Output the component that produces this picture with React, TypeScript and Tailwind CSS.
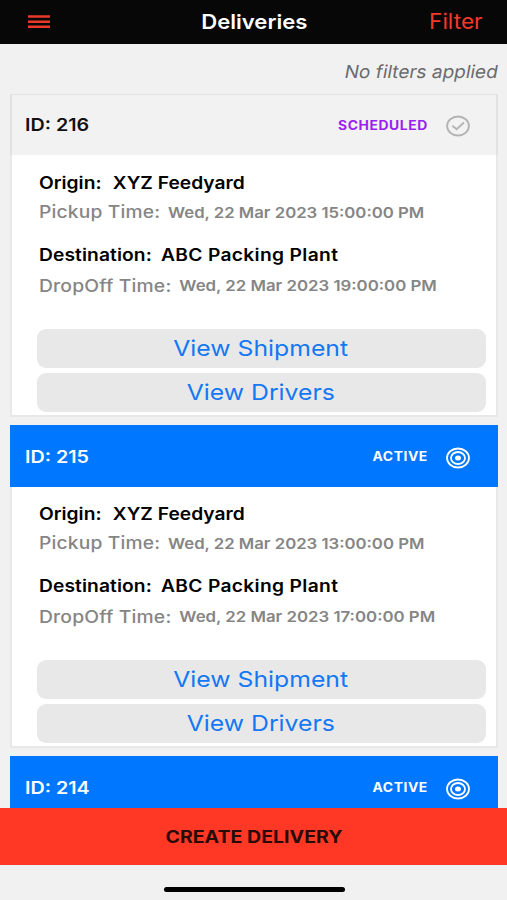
import clsx from 'clsx';

type Status = 'SCHEDULED' | 'ACTIVE';

interface Delivery {
  id: number;
  status: Status;
  details?: {
    origin: string;
    pickup: string;
    destination: string;
    dropoff: string;
  };
}

const DELIVERIES: Delivery[] = [
  {
    id: 216,
    status: 'SCHEDULED',
    details: {
      origin: 'XYZ Feedyard',
      pickup: 'Wed, 22 Mar 2023 15:00:00 PM',
      destination: 'ABC Packing Plant',
      dropoff: 'Wed, 22 Mar 2023 19:00:00 PM',
    },
  },
  {
    id: 215,
    status: 'ACTIVE',
    details: {
      origin: 'XYZ Feedyard',
      pickup: 'Wed, 22 Mar 2023 13:00:00 PM',
      destination: 'ABC Packing Plant',
      dropoff: 'Wed, 22 Mar 2023 17:00:00 PM',
    },
  },
  { id: 214, status: 'ACTIVE' },
];

function StatusIcon({ status }: { status: Status }) {
  if (status === 'SCHEDULED') {
    return (
      <svg width="24" height="22" viewBox="0 0 24 22" fill="none" stroke="#b4b4b4" strokeWidth="1.9">
        <ellipse cx="12" cy="11" rx="10.9" ry="9.5" />
        <path d="M6.4 10.8l4.2 3.5 7.4-6.8" />
      </svg>
    );
  }
  return (
    <svg width="24" height="22" viewBox="0 0 24 22" fill="none" stroke="#fff" strokeWidth="1.8">
      <ellipse cx="12" cy="11" rx="11" ry="9.5" />
      <ellipse cx="12" cy="11" rx="7" ry="6" />
      <ellipse cx="12" cy="11" rx="3" ry="2.5" fill="#fff" stroke="none" />
    </svg>
  );
}

function DeliveryCard({ delivery }: { delivery: Delivery }) {
  const active = delivery.status === 'ACTIVE';
  const { details } = delivery;

  return (
    <article className="flex h-[323px] shrink-0 flex-col">
      <header
        className={clsx(
          'flex shrink-0 items-center justify-between',
          active
            ? 'h-[62px] bg-[#0077ff] pt-[3px] pr-7 pl-[15px] text-white'
            : 'h-[61px] border-x-2 border-t border-[#e2e2e2] bg-[#f2f2f2] pt-0.5 pr-[26px] pl-[13px] text-[#111]',
        )}
      >
        <h2 className="origin-left scale-x-[1.16] text-[17px] font-semibold">ID: {delivery.id}</h2>
        <div className="flex items-center gap-[18px]">
          <span
            className={clsx(
              'origin-right scale-x-[1.11] text-[12.5px] font-bold tracking-[0.5px]',
              !active && 'text-[#9b1ff0]',
            )}
          >
            {delivery.status}
          </span>
          <StatusIcon status={delivery.status} />
        </div>
      </header>

      {details && (
        <div
          className={clsx(
            'flex-1 border-2 border-t-0 border-[#e8e8e8] bg-white pr-[10px] pl-[25px]',
            active ? 'pt-[13px]' : 'pt-[14px]',
          )}
        >
          <div className="mb-[13px] pl-0.5 whitespace-nowrap">
            <p className="flex h-[29px] origin-left scale-x-[1.13] items-center gap-[10px] text-[17px] font-semibold text-black">
              <span>Origin:</span>
              <span>{details.origin}</span>
            </p>
            <p className="flex h-[30px] origin-left scale-x-[1.13] items-center gap-[7px] text-[#858585]">
              <span className="text-[17px] font-medium tracking-[0.15px]">Pickup Time:</span>
              <span className="text-[14.8px] font-semibold">{details.pickup}</span>
            </p>
          </div>
          <div className="pl-0.5 whitespace-nowrap">
            <p className="flex h-[29px] origin-left scale-x-[1.13] items-center gap-2 text-[17px] font-semibold text-black">
              <span className="tracking-[0.08px]">Destination:</span>
              <span className="tracking-[0.3px]">{details.destination}</span>
            </p>
            <p className="flex h-[33px] origin-left scale-x-[1.135] items-center gap-[7px] text-[#858585]">
              <span className="text-[17px] font-medium tracking-[0.15px]">DropOff Time:</span>
              <span className="text-[14.8px] font-semibold">{details.dropoff}</span>
            </p>
          </div>

          <div className="mt-[26px] flex flex-col gap-[5px]">
            {['View Shipment', 'View Drivers'].map((label) => (
              <button key={label} className="flex h-[39px] items-center justify-center rounded-[9px] bg-[#e8e8e8] text-[#1478f5]">
                <span className="-ml-0.5 scale-x-[1.125] text-[22px]">{label}</span>
              </button>
            ))}
          </div>
        </div>
      )}
    </article>
  );
}

export default function App() {
  return (
    <div className="flex h-[900px] w-[507px] flex-col overflow-hidden bg-[#f1f1f1] font-['Inter',sans-serif]">
      <nav className="grid h-11 shrink-0 grid-cols-3 items-center bg-[#070707] pr-6 pl-7">
        <button aria-label="Menu">
          <svg width="22" height="14" viewBox="0 0 22 14" fill="none" stroke="#e8392a" strokeWidth="2.5">
            <path d="M0 1.6h22M0 6.7h22M0 11.8h22" />
          </svg>
        </button>
        <h1 className="-ml-[3px] scale-x-[1.105] pb-px text-center text-[20px] font-semibold text-white">Deliveries</h1>
        <button className="origin-right scale-x-[1.08] pb-px text-right text-[21px] text-[#f23a2a]">Filter</button>
      </nav>

      <main className="min-h-0 flex-1 overflow-hidden pr-[9px] pl-[10px]">
        <p className="flex h-[50px] items-center justify-end pt-1 text-[18px] text-[#6b6b6b]">
          <span className="origin-right scale-x-[1.055] -skew-x-[10deg]">No filters applied</span>
        </p>
        <div className="flex flex-col gap-2">
          {DELIVERIES.map((delivery) => (
            <DeliveryCard key={delivery.id} delivery={delivery} />
          ))}
        </div>
      </main>

      <button className="flex h-[57px] shrink-0 items-center justify-center bg-[#ff3826] pt-0.5 text-[#2a0a06]">
        <span className="ml-0.5 scale-x-[1.15] text-[17px] font-bold">CREATE DELIVERY</span>
      </button>
      <footer className="flex h-[35px] shrink-0 justify-center pt-[22px] pl-px">
        <div className="h-[5px] w-[181px] rounded-full bg-black" />
      </footer>
    </div>
  );
}
